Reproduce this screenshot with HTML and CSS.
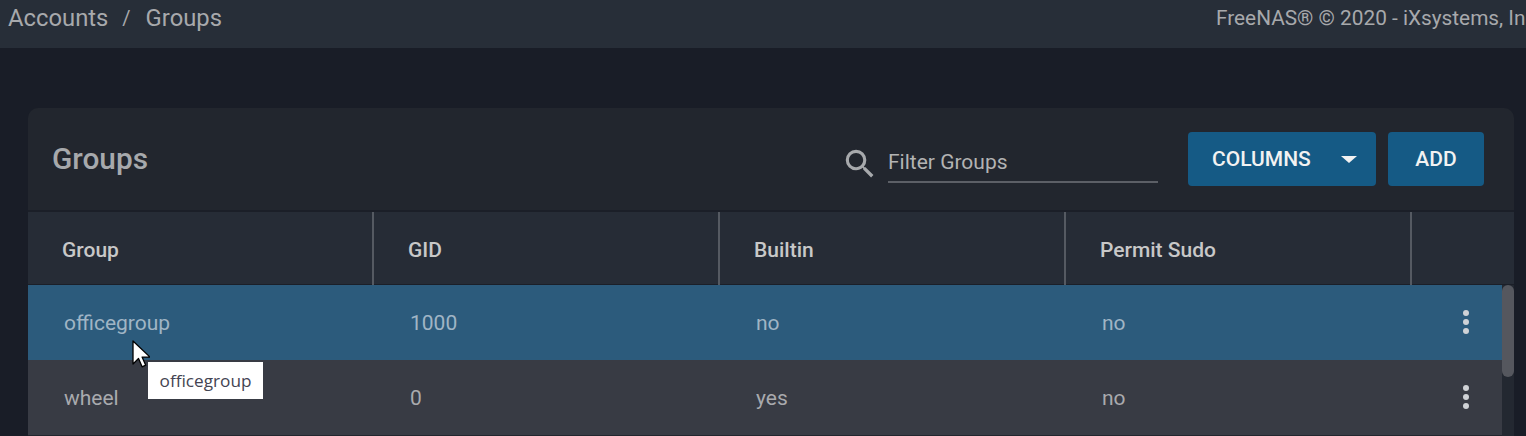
FILE: index.html
```html
<!DOCTYPE html>
<html lang="en">
<head>
<meta charset="utf-8">
<title>Groups</title>
<link rel="stylesheet" href="styles.css">
</head>
<body>
<header class="topbar">
  <nav class="crumbs"><span>Accounts</span><span class="sep">/</span><span>Groups</span></nav>
  <div class="copyright">FreeNAS® © 2020 - iXsystems, Inc</div>
</header>
<main class="content">
  <section class="card">
    <div class="toolbar">
      <h1 class="title">Groups</h1>
      <div class="filter">
        <svg class="search" viewBox="0 0 24 24" width="38" height="38"><path d="M15.5 14h-.79l-.28-.27A6.47 6.47 0 0 0 16 9.5 6.5 6.5 0 1 0 9.5 16c1.61 0 3.09-.59 4.23-1.57l.27.28v.79l5 4.99L20.49 19l-4.99-5zm-6 0C7.01 14 5 11.99 5 9.5S7.01 5 9.5 5 14 7.01 14 9.5 11.99 14 9.5 14z"/></svg>
        <div class="field">Filter Groups</div>
      </div>
      <button class="btn btn-columns"><span>COLUMNS</span><i class="caret"></i></button>
      <button class="btn btn-add">ADD</button>
    </div>
    <div class="head">
      <div class="hcell">Group</div>
      <div class="hcell">GID</div>
      <div class="hcell">Builtin</div>
      <div class="hcell">Permit Sudo</div>
      <div class="hcell hcell-last"></div>
    </div>
    <div class="body">
      <div class="rows">
        <div class="row row-active">
          <div class="cell">officegroup</div><div class="cell">1000</div><div class="cell">no</div><div class="cell">no</div>
          <div class="cell-menu"><i></i><i></i><i></i></div>
        </div>
        <div class="row">
          <div class="cell">wheel</div><div class="cell">0</div><div class="cell">yes</div><div class="cell">no</div>
          <div class="cell-menu"><i></i><i></i><i></i></div>
        </div>
      </div>
      <div class="scrolltrack"><div class="scrollthumb"></div></div>
    </div>
  </section>
</main>
<div class="tooltip">officegroup</div>
<svg class="cursor" viewBox="0 0 18 28" width="18" height="28"><path d="M1 1v23l5.5-5.5 3.6 8.3 3.6-1.6-3.6-8.1H18z" fill="#fff" stroke="#000" stroke-width="1.3" stroke-linejoin="round"/></svg>
</body>
</html>
```
FILE: styles.css
```css
* { box-sizing: border-box; }
html, body { height: 100%; }
body {
  margin: 0;
  overflow: hidden;
  background: #191d27;
  font-family: Roboto, "Liberation Sans", sans-serif;
  color: #b3b3b3;
  white-space: nowrap;
}
.topbar {
  height: 48px;
  background: #272e38;
  display: flex;
  justify-content: space-between;
  padding: 0 0 0 8px;
  overflow: hidden;
}
.crumbs { display: flex; align-items: center; height: 36px; font-size: 23.8px; color: #a7a9ac; }
.sep { margin: 0 15px 0 14px; font-size: 20px; }
.copyright { width: 310px; flex: none; font-size: 20.8px; line-height: 36px; color: #a7a9ac; overflow: hidden; }
.content { padding: 60px 12px 0 28px; }
.card { background: #22262e; border-radius: 10px 10px 0 0; overflow: hidden; }
.toolbar {
  height: 102px;
  display: flex;
  align-items: flex-start;
  padding: 24px 30px 0 24px;
}
.title { margin: 6px auto 0 0; font-size: 29.8px; font-weight: 500; line-height: 42px; color: #a7a9ac; }
.filter { display: flex; align-items: flex-start; margin-right: 30px; }
.search { fill: #a7a9ac; margin: 13px 9px 0 0; }
.field {
  width: 270px;
  height: 40px;
  margin-top: 11px;
  padding-top: 6px;
  font-size: 21px;
  line-height: 26px;
  color: #b3b3b3;
  border-bottom: 2px solid #5c5f66;
}
.btn {
  height: 54px;
  border: 0;
  border-radius: 4px;
  background: #155a85;
  color: #f2f2f2;
  font: 500 21px/54px Roboto, sans-serif;
  padding: 0;
}
.btn-columns { width: 188px; display: flex; align-items: center; padding: 0 19px 0 24px; justify-content: space-between; margin-right: 12px; }
.btn-add { width: 96px; line-height: 52px; }
.caret { width: 0; height: 0; border: 8px solid transparent; border-top: 7px solid #f2f2f2; border-bottom: 0; }
.head {
  height: 75px;
  display: grid;
  grid-template-columns: repeat(4, 346px) 1fr;
  background: #262c36;
  border-top: 2px solid #1b1f28;
  border-bottom: 1px solid #1b1f28;
}
.hcell {
  padding-left: 34px;
  font-size: 21px;
  font-weight: 500;
  line-height: 76px;
  color: #c8c8c8;
  border-right: 2px solid #555a62;
}
.hcell-last { border-right: 0; }
.body { display: flex; height: 151px; }
.rows { flex: 1; min-width: 0; }
.row {
  height: 75px;
  display: grid;
  grid-template-columns: repeat(4, 346px) 1fr;
  align-items: center;
  background: #383b44;
  font-size: 21px;
  color: #a9aaae;
}
.row-active { background: #2c5b7c; color: #a0b5c5; }
.cell { padding: 1px 0 0 36px; }
.cell-menu { display: flex; flex-direction: column; gap: 3px; align-items: flex-end; padding: 0 33px 2px 0; }
.cell-menu i { width: 6px; height: 6px; border-radius: 50%; background: #cfd2d6; }
.scrolltrack { width: 12px; background: #232831; }
.scrollthumb { height: 92px; border-radius: 6px; background: #55575e; }
.tooltip {
  position: absolute;
  left: 148px;
  top: 362px;
  width: 115px;
  height: 37px;
  background: #fff;
  color: #444452;
  font: 17.2px/37px "Open Sans", sans-serif;
  text-align: center;
}
.cursor { position: absolute; left: 132px; top: 340px; }
```
